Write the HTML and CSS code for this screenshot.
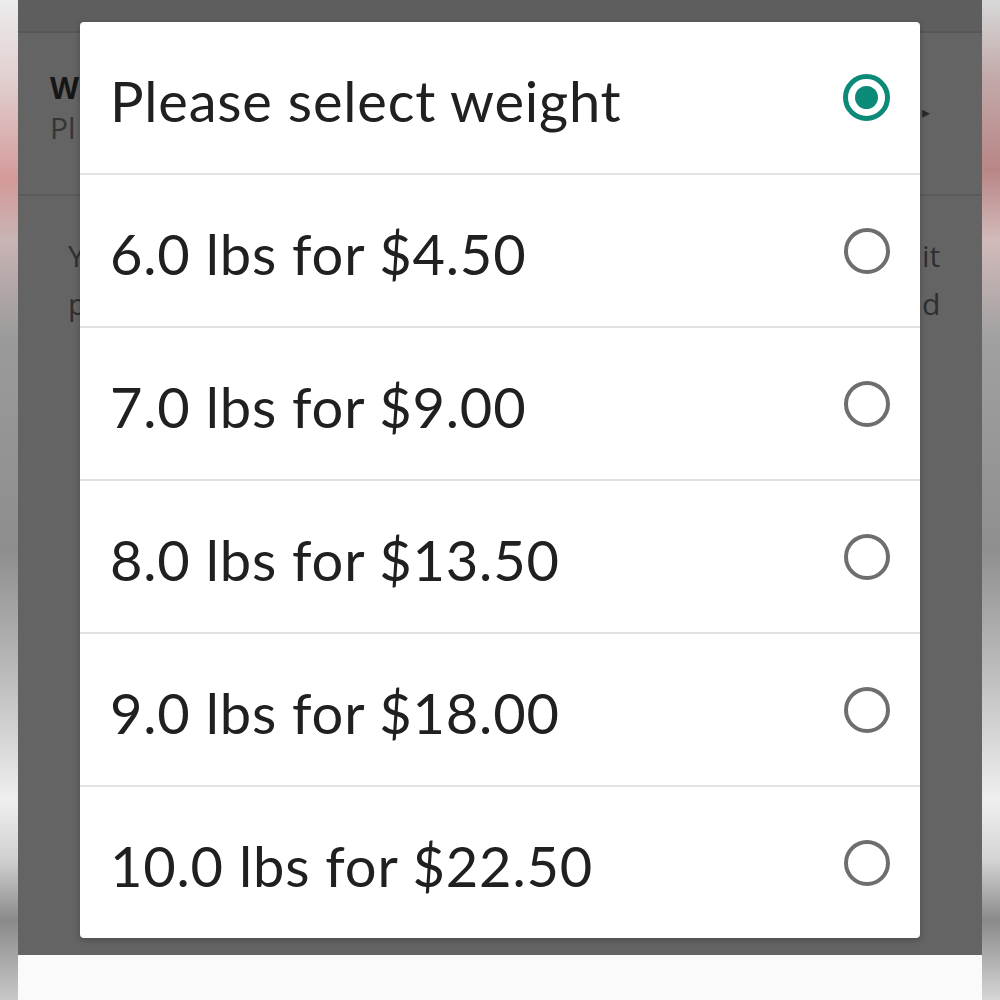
FILE: index.html
```html
<!DOCTYPE html>
<html>

<head>
    <title>Select weight</title>
    <link rel="stylesheet" href="styles.css">
</head>

<body>
    <div class="frame">
        <div class="edge edge-left"></div>

        <div class="screen">
            <div class="page">
                <div class="topbar"></div>
                <div class="field">
                    <div class="side side-left">
                        <div class="field-label">W</div>
                        <div class="field-value">Pl</div>
                    </div>
                    <div class="side side-right">
                        <span class="chevron">&#9656;</span>
                    </div>
                </div>
                <div class="note">
                    <div class="side side-left">
                        <div class="note-line">Y</div>
                        <div class="note-line">p</div>
                    </div>
                    <div class="side side-right">
                        <div class="note-line">it</div>
                        <div class="note-line">d</div>
                    </div>
                </div>

                <div class="dialog">
                    <label class="option">
                        <span class="option-text">Please select weight</span>
                        <span class="radio checked"></span>
                    </label>
                    <label class="option">
                        <span class="option-text">6.0 lbs for $4.50</span>
                        <span class="radio"></span>
                    </label>
                    <label class="option">
                        <span class="option-text">7.0 lbs for $9.00</span>
                        <span class="radio"></span>
                    </label>
                    <label class="option">
                        <span class="option-text">8.0 lbs for $13.50</span>
                        <span class="radio"></span>
                    </label>
                    <label class="option">
                        <span class="option-text">9.0 lbs for $18.00</span>
                        <span class="radio"></span>
                    </label>
                    <label class="option">
                        <span class="option-text">10.0 lbs for $22.50</span>
                        <span class="radio"></span>
                    </label>
                </div>
            </div>
            <div class="bottom"></div>
        </div>

        <div class="edge edge-right"></div>
    </div>
</body>

</html>
```

FILE: styles.css
```css
body {
    margin: 0;
    font-family: Lato, "Open Sans", sans-serif;
    background-color: #646464;
}

.frame {
    display: flex;
    width: 1000px;
    height: 1000px;
    overflow: hidden;
}

.edge {
    width: 18px;
    flex-shrink: 0;
}

.edge-left {
    background: linear-gradient(to bottom, #ececec 0%, #e2cfcf 8%, #d49a9a 18%, #c9b4b4 24%, #9a9a9a 34%, #8e8e8e 55%, #bdbdbd 68%, #efefef 80%, #d0d0d0 86%, #8a8a8a 92%, #c8c8c8 100%);
}

.edge-right {
    background: linear-gradient(to bottom, #d8d8d8 0%, #c2a8a8 8%, #b98686 17%, #d3baba 24%, #a0a0a0 34%, #8f8f8f 55%, #c0c0c0 68%, #efefef 80%, #d4d4d4 86%, #8a8a8a 92%, #d6d6d6 100%);
}

.screen {
    flex: 1;
    display: flex;
    flex-direction: column;
}

.page {
    position: relative;
    height: 955px;
    background-color: #646464;
    color: #1c1c1c;
}

.topbar {
    height: 31px;
    background-color: #5e5e5e;
    border-bottom: 2px solid #575757;
}

/* background rows: only the parts beside the dialog are drawn */
.field,
.note {
    display: flex;
    justify-content: space-between;
    font-family: "Open Sans", sans-serif;
    font-size: 30px;
}

.field {
    height: 163px;
    box-sizing: border-box;
    padding-top: 35px;
    border-bottom: 2px solid #5b5b5b;
}

.side {
    white-space: nowrap;
}

.side-left {
    width: 40px;
    padding-left: 32px;
}

.side-right {
    width: 60px;
    padding-left: 2px;
}

.field-label {
    font-weight: 700;
    line-height: 40px;
    color: #161616;
}

.field-value {
    line-height: 40px;
    color: #353535;
}

.chevron {
    display: block;
    padding-top: 34px;
    font-size: 16px;
    line-height: 20px;
    color: #2a2a2a;
}

.note {
    padding-top: 36px;
    line-height: 48px;
    color: #2f2f2f;
}

.note .side-left {
    width: 30px;
    padding-left: 50px;
}

.dialog {
    position: absolute;
    left: 62px;
    top: 22px;
    width: 840px;
    background: #ffffff;
    border-radius: 4px;
    box-shadow: 0 2px 6px rgba(0, 0, 0, 0.25);
    display: flex;
    flex-direction: column;
}

.option {
    display: flex;
    align-items: center;
    justify-content: space-between;
    height: 151px;
    padding: 0 30px;
    border-bottom: 2px solid #e2e2e2;
}

.option:last-child {
    border-bottom: none;
}

.option-text {
    font-size: 56px;
    letter-spacing: 0.8px;
    color: #202020;
    padding-top: 6px;
}

.radio {
    width: 38px;
    height: 38px;
    border: 4px solid #6e6e6e;
    border-radius: 50%;
    position: relative;
}

.radio.checked {
    border: 5px solid #0a8a77;
    width: 37px;
    height: 37px;
}

.radio.checked::after {
    content: "";
    position: absolute;
    left: 7px;
    top: 7px;
    width: 23px;
    height: 23px;
    border-radius: 50%;
    background-color: #0a8a77;
}

.bottom {
    flex: 1;
    background-color: #fafafa;
}
```
